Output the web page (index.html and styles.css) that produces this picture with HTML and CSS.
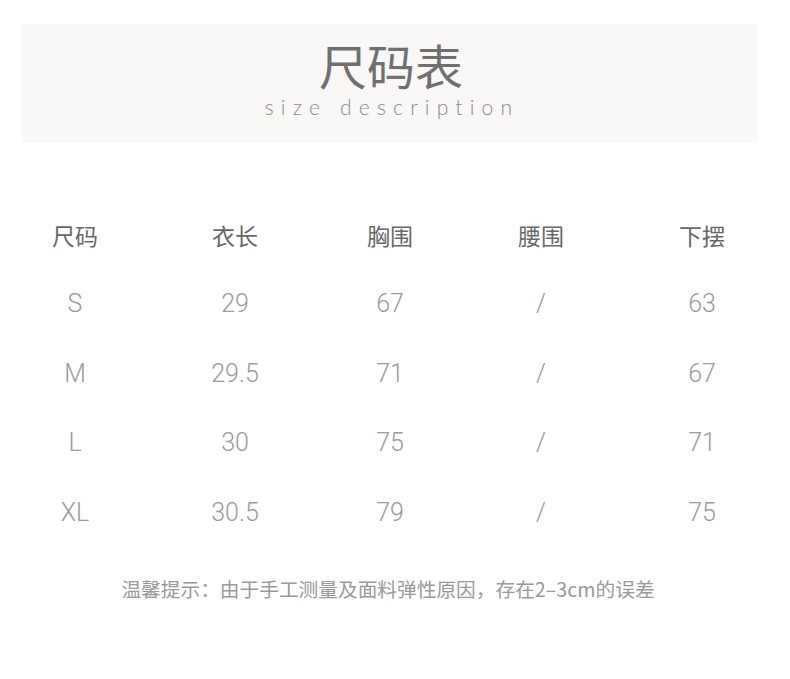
FILE: index.html
```html
<!DOCTYPE html>
<html lang="zh">
<head>
<meta charset="utf-8">
<link rel="stylesheet" href="styles.css">
</head>
<body>
<div class="banner">
  <div class="title">尺码表</div>
  <div class="subtitle">size description</div>
</div>
<div class="table">
  <div class="row head">
    <div>尺码</div><div>衣长</div><div>胸围</div><div>腰围</div><div>下摆</div>
  </div>
  <div class="row">
    <div>S</div><div>29</div><div>67</div><div>/</div><div>63</div>
  </div>
  <div class="row">
    <div>M</div><div>29.5</div><div>71</div><div>/</div><div>67</div>
  </div>
  <div class="row">
    <div>L</div><div>30</div><div>75</div><div>/</div><div>71</div>
  </div>
  <div class="row">
    <div>XL</div><div>30.5</div><div>79</div><div>/</div><div>75</div>
  </div>
</div>
<div class="note">温馨提示：由于手工测量及面料弹性原因，存在2–3cm的误差</div>
</body>
</html>
```
FILE: styles.css
```css
html, body {
  margin: 0;
  padding: 0;
  background: #ffffff;
}
body {
  width: 790px;
  height: 679px;
  overflow: hidden;
  font-family: "Noto Sans CJK SC", "Noto Sans", sans-serif;
}
.banner {
  margin: 24px 0 0 22px;
  width: 736px;
  height: 119px;
  background: #f9f8f6;
  display: flex;
  flex-direction: column;
  align-items: center;
}
.title {
  margin-top: 15px;
  font-size: 48px;
  line-height: 50px;
  color: #707070;
  padding-left: 2px;
}
.subtitle {
  margin-top: 6px;
  font-family: "Lato", "Noto Sans", sans-serif;
  font-weight: 300;
  font-size: 21px;
  line-height: 24px;
  letter-spacing: 7.2px;
  color: #8a8a8a;
  padding-left: 4px;
}
.table {
  margin-top: 58px;
}
.row {
  display: grid;
  grid-template-columns: 150px 170px 140px 162px 160px;
  height: 69.6px;
  align-items: center;
  text-align: center;
  font-family: "Roboto", "Noto Sans CJK SC", sans-serif;
  font-weight: 300;
  font-size: 25px;
  color: #9a9a9a;
}
.row.head {
  font-family: "Noto Sans CJK SC", sans-serif;
  font-weight: 400;
  font-size: 23px;
  color: #686868;
  height: 68px;
}
.note {
  margin-top: 28px;
  text-align: center;
  font-family: "Noto Sans CJK SC", sans-serif;
  font-size: 19.7px;
  line-height: 28px;
  color: #999999;
  padding-right: 14px;
}
```
